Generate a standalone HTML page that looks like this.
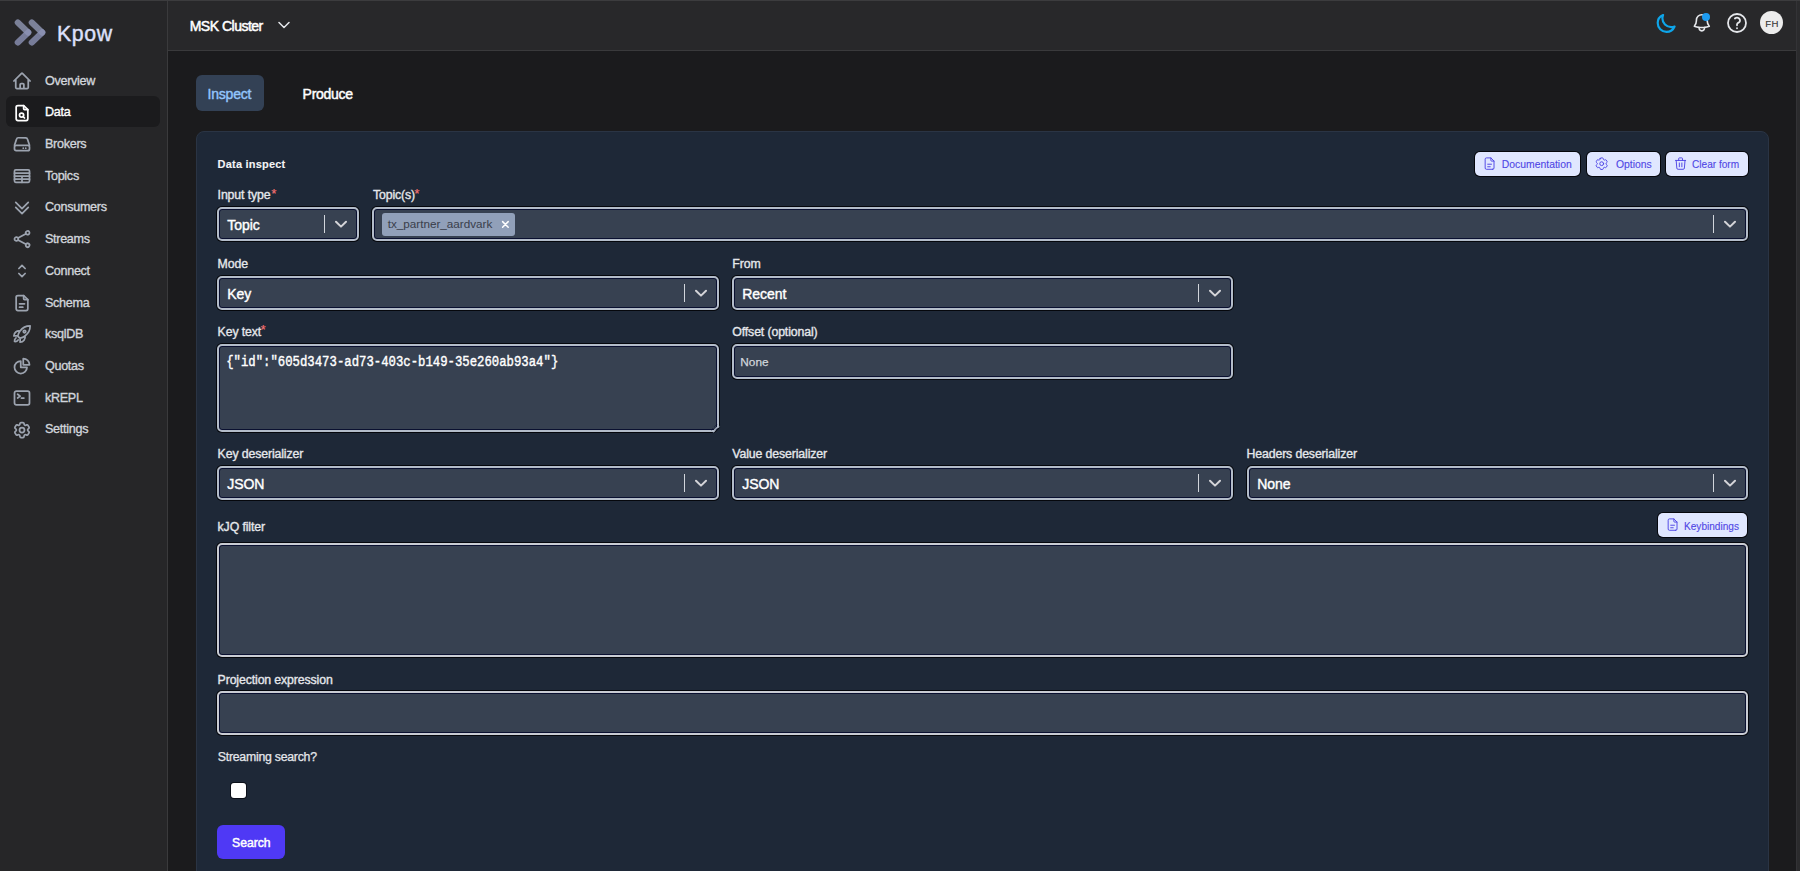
<!DOCTYPE html><html><head><meta charset="utf-8"><style>
html,body{margin:0;padding:0;width:1800px;height:871px;overflow:hidden;background:#1b1b1d;font-family:'Liberation Sans', sans-serif;}
.r{position:absolute;box-sizing:border-box;}
.t{position:absolute;line-height:1;white-space:pre;}
</style></head><body>
<div class="r" style="left:0px;top:0px;width:168px;height:871px;background:#262628;"></div>
<div class="r" style="left:167px;top:0px;width:1px;height:871px;background:#3a3a3c;"></div>
<div class="r" style="left:168px;top:0px;width:1628px;height:50px;background:#28282a;"></div>
<div class="r" style="left:168px;top:50px;width:1628px;height:1px;background:#3a3a3c;"></div>
<div class="r" style="left:1796px;top:0px;width:4px;height:871px;background:#2b2b2d;border-left:1px solid #333336;"></div>
<div class="r" style="left:0px;top:0px;width:1800px;height:1px;background:#3c3c3e;"></div>
<svg class="r" style="left:10px;top:16px;" width="40" height="34" viewBox="10 16 40 34"><defs><linearGradient id="lg1" x1="0" y1="0" x2="1" y2="1"><stop offset="0" stop-color="#6e7390"/><stop offset="1" stop-color="#9aa1c8"/></linearGradient><linearGradient id="lg2" x1="0" y1="1" x2="1" y2="0"><stop offset="0" stop-color="#8f96bb"/><stop offset="1" stop-color="#7c829f"/></linearGradient></defs><g fill="none" stroke-linecap="round" stroke-width="6.2" opacity="0.95"><path d="M17.8 22.6 L28.2 32.6" stroke="#80869f"/><path d="M17.8 42.4 L28.2 32.4" stroke="#9299be" opacity="0.8"/><path d="M31.8 22.6 L42.2 32.6" stroke="#80869f"/><path d="M31.8 42.4 L42.2 32.4" stroke="#9299be" opacity="0.8"/></g></svg>
<div class="t" style="left:57.0px;top:23.89px;font-size:21.3px;color:#dde0fb;font-weight:400;letter-spacing:0.6px;font-family:'Liberation Sans', sans-serif;-webkit-text-stroke:0.4px #dde0fb;">Kpow</div>
<div class="r" style="left:6px;top:96px;width:154px;height:31px;background:#1b1b1d;border-radius:6px;"></div>
<svg class="r" style="left:12px;top:70.8px;" width="20" height="20" viewBox="0 0 24 24"><g fill="none" stroke="#9ca3af" stroke-width="2.1" stroke-linecap="round" stroke-linejoin="round"><path d="m2.25 12 8.954-8.955c.44-.439 1.152-.439 1.591 0L21.75 12M4.5 9.75v10.125c0 .621.504 1.125 1.125 1.125H9.75v-4.875c0-.621.504-1.125 1.125-1.125h2.25c.621 0 1.125.504 1.125 1.125V21h4.125c.621 0 1.125-.504 1.125-1.125V9.75M8.25 21h8.25"/></g></svg>
<div class="t" style="left:44.9px;top:74.69px;font-size:12.6px;color:#d1d5db;font-weight:400;letter-spacing:-0.28px;font-family:'Liberation Sans', sans-serif;-webkit-text-stroke:0.35px #d1d5db;">Overview</div>
<svg class="r" style="left:12px;top:102.5px;" width="20" height="20" viewBox="0 0 24 24"><g fill="none" stroke="#ffffff" stroke-width="2.1" stroke-linecap="round" stroke-linejoin="round"><path d="M14 3v4a1 1 0 0 0 1 1h4"/><path d="M17 21H7a2 2 0 0 1-2-2V5a2 2 0 0 1 2-2h7l5 5v11a2 2 0 0 1-2 2z"/><circle cx="11.5" cy="14.5" r="2.5"/><path d="M13.3 16.3 15 18"/></g></svg>
<div class="t" style="left:44.9px;top:106.39px;font-size:12.6px;color:#ffffff;font-weight:400;letter-spacing:-0.28px;font-family:'Liberation Sans', sans-serif;-webkit-text-stroke:0.35px #ffffff;">Data</div>
<svg class="r" style="left:12px;top:134.2px;" width="20" height="20" viewBox="0 0 24 24"><g fill="none" stroke="#9ca3af" stroke-width="2.1" stroke-linecap="round" stroke-linejoin="round"><path d="M3 13.5 5.5 6A2 2 0 0 1 7.4 4.5h9.2A2 2 0 0 1 18.5 6L21 13.5"/><rect x="3" y="13.5" width="18" height="6.5" rx="2"/><path d="M16.5 17h.01M13.5 17h.01"/></g></svg>
<div class="t" style="left:44.9px;top:138.09px;font-size:12.6px;color:#d1d5db;font-weight:400;letter-spacing:-0.28px;font-family:'Liberation Sans', sans-serif;-webkit-text-stroke:0.35px #d1d5db;">Brokers</div>
<svg class="r" style="left:12px;top:165.9px;" width="20" height="20" viewBox="0 0 24 24"><g fill="none" stroke="#9ca3af" stroke-width="2.1" stroke-linecap="round" stroke-linejoin="round"><rect x="3" y="4.5" width="18" height="15" rx="1.5"/><path d="M3 8.6h18M3 12.2h18M3 15.8h18M12 12.2v7.3"/></g></svg>
<div class="t" style="left:44.9px;top:169.79px;font-size:12.6px;color:#d1d5db;font-weight:400;letter-spacing:-0.28px;font-family:'Liberation Sans', sans-serif;-webkit-text-stroke:0.35px #d1d5db;">Topics</div>
<svg class="r" style="left:12px;top:197.6px;" width="20" height="20" viewBox="0 0 24 24"><g fill="none" stroke="#9ca3af" stroke-width="2.1" stroke-linecap="round" stroke-linejoin="round"><path d="m4.5 5.25 7.5 7.5 7.5-7.5m-15 6 7.5 7.5 7.5-7.5"/></g></svg>
<div class="t" style="left:44.9px;top:201.49px;font-size:12.6px;color:#d1d5db;font-weight:400;letter-spacing:-0.28px;font-family:'Liberation Sans', sans-serif;-webkit-text-stroke:0.35px #d1d5db;">Consumers</div>
<svg class="r" style="left:12px;top:229.3px;" width="20" height="20" viewBox="0 0 24 24"><g fill="none" stroke="#9ca3af" stroke-width="2.1" stroke-linecap="round" stroke-linejoin="round"><path d="M7.217 10.907a2.25 2.25 0 1 0 0 2.186m0-2.186c.18.324.283.696.283 1.093s-.103.77-.283 1.093m0-2.186 9.566-5.314m-9.566 7.5 9.566 5.314m0 0a2.25 2.25 0 1 0 3.935 2.186 2.25 2.25 0 0 0-3.935-2.186Zm0-12.814a2.25 2.25 0 1 0 3.933-2.185 2.25 2.25 0 0 0-3.933 2.185Z"/></g></svg>
<div class="t" style="left:44.9px;top:233.19px;font-size:12.6px;color:#d1d5db;font-weight:400;letter-spacing:-0.28px;font-family:'Liberation Sans', sans-serif;-webkit-text-stroke:0.35px #d1d5db;">Streams</div>
<svg class="r" style="left:12px;top:261.0px;" width="20" height="20" viewBox="0 0 24 24"><g fill="none" stroke="#9ca3af" stroke-width="2.1" stroke-linecap="round" stroke-linejoin="round"><path d="M8.25 15 12 18.75 15.75 15m-7.5-6L12 5.25 15.75 9"/></g></svg>
<div class="t" style="left:44.9px;top:264.89px;font-size:12.6px;color:#d1d5db;font-weight:400;letter-spacing:-0.28px;font-family:'Liberation Sans', sans-serif;-webkit-text-stroke:0.35px #d1d5db;">Connect</div>
<svg class="r" style="left:12px;top:292.7px;" width="20" height="20" viewBox="0 0 24 24"><g fill="none" stroke="#9ca3af" stroke-width="2.1" stroke-linecap="round" stroke-linejoin="round"><path d="M14 3v4a1 1 0 0 0 1 1h4"/><path d="M17 21H7a2 2 0 0 1-2-2V5a2 2 0 0 1 2-2h7l5 5v11a2 2 0 0 1-2 2z"/><path d="M9 13h6M9 17h4"/></g></svg>
<div class="t" style="left:44.9px;top:296.59px;font-size:12.6px;color:#d1d5db;font-weight:400;letter-spacing:-0.28px;font-family:'Liberation Sans', sans-serif;-webkit-text-stroke:0.35px #d1d5db;">Schema</div>
<svg class="r" style="left:12px;top:324.4px;" width="20" height="20" viewBox="0 0 24 24"><g fill="none" stroke="#9ca3af" stroke-width="2.1" stroke-linecap="round" stroke-linejoin="round"><path d="M15.59 14.37a6 6 0 0 1-5.84 7.38v-4.8m5.84-2.58a14.98 14.98 0 0 0 6.16-12.12A14.98 14.98 0 0 0 9.631 8.41m5.96 5.96a14.926 14.926 0 0 1-5.841 2.58m-.119-8.54a6 6 0 0 0-7.381 5.84h4.8m2.581-5.84a14.927 14.927 0 0 0-2.58 5.84m2.699 2.7c-.103.021-.207.041-.311.06a15.09 15.09 0 0 1-2.448-2.448 14.9 14.9 0 0 1 .06-.312m-2.24 2.39a4.493 4.493 0 0 0-1.757 4.306 4.493 4.493 0 0 0 4.306-1.758M16.5 9a1.5 1.5 0 1 1-3 0 1.5 1.5 0 0 1 3 0Z"/></g></svg>
<div class="t" style="left:44.9px;top:328.29px;font-size:12.6px;color:#d1d5db;font-weight:400;letter-spacing:-0.28px;font-family:'Liberation Sans', sans-serif;-webkit-text-stroke:0.35px #d1d5db;">ksqlDB</div>
<svg class="r" style="left:12px;top:356.1px;" width="20" height="20" viewBox="0 0 24 24"><g fill="none" stroke="#9ca3af" stroke-width="2.1" stroke-linecap="round" stroke-linejoin="round"><path d="M10.5 6a7.5 7.5 0 1 0 7.5 7.5h-7.5V6Z"/><path d="M13.5 10.5H21A7.5 7.5 0 0 0 13.5 3v7.5Z"/></g></svg>
<div class="t" style="left:44.9px;top:359.99px;font-size:12.6px;color:#d1d5db;font-weight:400;letter-spacing:-0.28px;font-family:'Liberation Sans', sans-serif;-webkit-text-stroke:0.35px #d1d5db;">Quotas</div>
<svg class="r" style="left:12px;top:387.8px;" width="20" height="20" viewBox="0 0 24 24"><g fill="none" stroke="#9ca3af" stroke-width="2.1" stroke-linecap="round" stroke-linejoin="round"><path d="m6.75 7.5 3 2.25-3 2.25m4.5 0h3m-9 8.25h13.5A2.25 2.25 0 0 0 21 18V6a2.25 2.25 0 0 0-2.25-2.25H5.25A2.25 2.25 0 0 0 3 6v12a2.25 2.25 0 0 0 2.25 2.25Z"/></g></svg>
<div class="t" style="left:44.9px;top:391.69px;font-size:12.6px;color:#d1d5db;font-weight:400;letter-spacing:-0.28px;font-family:'Liberation Sans', sans-serif;-webkit-text-stroke:0.35px #d1d5db;">kREPL</div>
<svg class="r" style="left:12px;top:419.5px;" width="20" height="20" viewBox="0 0 24 24"><g fill="none" stroke="#9ca3af" stroke-width="2.1" stroke-linecap="round" stroke-linejoin="round"><path d="M9.594 3.94c.09-.542.56-.94 1.11-.94h2.593c.55 0 1.02.398 1.11.94l.213 1.281c.063.374.313.686.645.87.074.04.147.083.22.127.325.196.72.257 1.075.124l1.217-.456a1.125 1.125 0 0 1 1.37.49l1.296 2.247a1.125 1.125 0 0 1-.26 1.431l-1.003.827c-.293.241-.438.613-.43.992a7.723 7.723 0 0 1 0 .255c-.008.378.137.75.43.991l1.004.827c.424.35.534.955.26 1.43l-1.298 2.247a1.125 1.125 0 0 1-1.369.491l-1.217-.456c-.355-.133-.75-.072-1.076.124a6.47 6.47 0 0 1-.22.128c-.331.183-.581.495-.644.869l-.213 1.281c-.09.543-.56.94-1.11.94h-2.594c-.55 0-1.019-.398-1.11-.94l-.213-1.281c-.062-.374-.312-.686-.644-.87a6.52 6.52 0 0 1-.22-.127c-.325-.196-.72-.257-1.076-.124l-1.217.456a1.125 1.125 0 0 1-1.369-.49l-1.297-2.247a1.125 1.125 0 0 1 .26-1.431l1.004-.827c.292-.24.437-.613.43-.991a6.932 6.932 0 0 1 0-.255c.007-.38-.138-.751-.43-.992l-1.004-.827a1.125 1.125 0 0 1-.26-1.43l1.297-2.247a1.125 1.125 0 0 1 1.37-.491l1.216.456c.356.133.751.072 1.076-.124.072-.044.146-.086.22-.128.332-.183.582-.495.644-.869l.214-1.28Z"/><path d="M15 12a3 3 0 1 1-6 0 3 3 0 0 1 6 0Z"/></g></svg>
<div class="t" style="left:44.9px;top:423.39px;font-size:12.6px;color:#d1d5db;font-weight:400;letter-spacing:-0.28px;font-family:'Liberation Sans', sans-serif;-webkit-text-stroke:0.35px #d1d5db;">Settings</div>
<div class="t" style="left:189.7px;top:19.40px;font-size:14px;color:#ffffff;font-weight:400;letter-spacing:-0.5px;font-family:'Liberation Sans', sans-serif;-webkit-text-stroke:0.5px #ffffff;">MSK Cluster</div>
<svg class="r" style="left:278px;top:21px;" width="12" height="9" viewBox="0 0 12 9"><path d="M1 1.5 6 6.5 11 1.5" fill="none" stroke="#e5e7eb" stroke-width="1.5" stroke-linecap="round" stroke-linejoin="round"/></svg>
<svg class="r" style="left:1655.2px;top:12.6px;" width="21.6" height="21.6" viewBox="0 0 24 24"><path d="M21.752 15.002A9.72 9.72 0 0 1 18 15.75c-5.385 0-9.75-4.365-9.75-9.75 0-1.33.266-2.597.748-3.752A9.753 9.753 0 0 0 3 11.25C3 16.635 7.365 21 12.75 21a9.753 9.753 0 0 0 9.002-5.998Z" fill="none" stroke="#0ea5e9" stroke-width="2.4" stroke-linejoin="round"/></svg>
<svg class="r" style="left:1690.5px;top:12.1px;" width="21.6" height="21.6" viewBox="0 0 24 24"><path d="M14.857 17.082a23.848 23.848 0 0 0 5.454-1.31A8.967 8.967 0 0 1 18 9.75V9A6 6 0 0 0 6 9v.75a8.967 8.967 0 0 1-2.312 6.022c1.733.64 3.56 1.085 5.455 1.31m5.714 0a24.255 24.255 0 0 1-5.714 0m5.714 0a3 3 0 1 1-5.714 0" fill="none" stroke="#e5e7eb" stroke-width="1.8" stroke-linecap="round" stroke-linejoin="round"/></svg>
<div class="r" style="left:1702px;top:13px;width:8px;height:8px;background:#1d9bf0;border-radius:50%;"></div>
<svg class="r" style="left:1725px;top:11px;" width="24" height="24" viewBox="0 0 24 24"><path d="M9.879 7.519c1.171-1.025 3.071-1.025 4.242 0 1.172 1.025 1.172 2.687 0 3.712-.203.179-.43.326-.67.442-.745.361-1.45.999-1.45 1.827v.75M21 12a9 9 0 1 1-18 0 9 9 0 0 1 18 0Zm-9 5.25h.008v.008H12v-.008Z" fill="none" stroke="#e5e7eb" stroke-width="1.8" stroke-linecap="round" stroke-linejoin="round"/></svg>
<div class="r" style="left:1760px;top:11px;width:23px;height:23px;background:#ececec;border-radius:50%;"></div>
<div class="t" style="left:1765.3px;top:18.64px;font-size:9.6px;color:#333333;font-weight:400;letter-spacing:0.3px;font-family:'Liberation Sans', sans-serif;-webkit-text-stroke:0.1px #333333;">FH</div>
<div class="r" style="left:196px;top:75px;width:68px;height:36px;background:#334155;border-radius:6px;"></div>
<div class="t" style="left:207.5px;top:87.00px;font-size:14px;color:#93c5fd;font-weight:400;letter-spacing:-0.2px;font-family:'Liberation Sans', sans-serif;-webkit-text-stroke:0.4px #93c5fd;">Inspect</div>
<div class="t" style="left:302.6px;top:87.40px;font-size:14px;color:#ffffff;font-weight:400;letter-spacing:-0.3px;font-family:'Liberation Sans', sans-serif;-webkit-text-stroke:0.45px #ffffff;">Produce</div>
<div class="r" style="left:196px;top:131px;width:1573px;height:759px;background:#1e2837;border:1px solid #2a3444;border-radius:8px;"></div>
<div class="t" style="left:217.6px;top:159.25px;font-size:11px;color:#f3f4f6;font-weight:700;letter-spacing:0.2px;font-family:'Liberation Sans', sans-serif;-webkit-text-stroke:0.1px #f3f4f6;">Data inspect</div>
<div class="r" style="left:1475px;top:152px;width:105px;height:24px;background:#e0e7ff;border-radius:5px;box-shadow:0 0 0 1px #05070c;"></div>
<svg class="r" style="left:1482.4px;top:156px" width="15.2" height="15.2" viewBox="0 0 24 24"><g fill="none" stroke="#4f46e5" stroke-width="1.5" stroke-linecap="round" stroke-linejoin="round"><path d="M14 3v4a1 1 0 0 0 1 1h4"/><path d="M17 21H7a2 2 0 0 1-2-2V5a2 2 0 0 1 2-2h7l5 5v11a2 2 0 0 1-2 2z"/><path d="M9 13h6M9 17h4"/></g></svg>
<div class="t" style="left:1501.8px;top:160.16px;font-size:10.4px;color:#4f46e5;font-weight:400;letter-spacing:0px;font-family:'Liberation Sans', sans-serif;-webkit-text-stroke:0.1px #4f46e5;">Documentation</div>
<div class="r" style="left:1587px;top:152px;width:73px;height:24px;background:#e0e7ff;border-radius:5px;box-shadow:0 0 0 1px #05070c;"></div>
<svg class="r" style="left:1594.2px;top:155.8px" width="15.4" height="15.4" viewBox="0 0 24 24"><g fill="none" stroke="#4f46e5" stroke-width="1.5" stroke-linecap="round" stroke-linejoin="round"><path d="M9.594 3.94c.09-.542.56-.94 1.11-.94h2.593c.55 0 1.02.398 1.11.94l.213 1.281c.063.374.313.686.645.87.074.04.147.083.22.127.325.196.72.257 1.075.124l1.217-.456a1.125 1.125 0 0 1 1.37.49l1.296 2.247a1.125 1.125 0 0 1-.26 1.431l-1.003.827c-.293.241-.438.613-.43.992a7.723 7.723 0 0 1 0 .255c-.008.378.137.75.43.991l1.004.827c.424.35.534.955.26 1.43l-1.298 2.247a1.125 1.125 0 0 1-1.369.491l-1.217-.456c-.355-.133-.75-.072-1.076.124a6.47 6.47 0 0 1-.22.128c-.331.183-.581.495-.644.869l-.213 1.281c-.09.543-.56.94-1.11.94h-2.594c-.55 0-1.019-.398-1.11-.94l-.213-1.281c-.062-.374-.312-.686-.644-.87a6.52 6.52 0 0 1-.22-.127c-.325-.196-.72-.257-1.076-.124l-1.217.456a1.125 1.125 0 0 1-1.369-.49l-1.297-2.247a1.125 1.125 0 0 1 .26-1.431l1.004-.827c.292-.24.437-.613.43-.991a6.932 6.932 0 0 1 0-.255c.007-.38-.138-.751-.43-.992l-1.004-.827a1.125 1.125 0 0 1-.26-1.43l1.297-2.247a1.125 1.125 0 0 1 1.37-.491l1.216.456c.356.133.751.072 1.076-.124.072-.044.146-.086.22-.128.332-.183.582-.495.644-.869l.214-1.28Z"/><path d="M15 12a3 3 0 1 1-6 0 3 3 0 0 1 6 0Z"/></g></svg>
<div class="t" style="left:1616.0px;top:160.16px;font-size:10.4px;color:#4f46e5;font-weight:400;letter-spacing:0px;font-family:'Liberation Sans', sans-serif;-webkit-text-stroke:0.1px #4f46e5;">Options</div>
<div class="r" style="left:1666px;top:152px;width:82px;height:24px;background:#e0e7ff;border-radius:5px;box-shadow:0 0 0 1px #05070c;"></div>
<svg class="r" style="left:1673.4px;top:155.6px" width="15.2" height="15.2" viewBox="0 0 24 24"><g fill="none" stroke="#4f46e5" stroke-width="1.5" stroke-linecap="round" stroke-linejoin="round"><path d="M4 7h16M10 11v6M14 11v6M5 7l1 12a2 2 0 0 0 2 2h8a2 2 0 0 0 2-2l1-12M9 7V4a1 1 0 0 1 1-1h4a1 1 0 0 1 1 1v3"/></g></svg>
<div class="t" style="left:1692.0px;top:160.41px;font-size:10.1px;color:#4f46e5;font-weight:400;letter-spacing:0px;font-family:'Liberation Sans', sans-serif;-webkit-text-stroke:0.1px #4f46e5;">Clear form</div>
<div class="t" style="left:217.6px;top:189.44px;font-size:12.3px;color:#e5e7eb;font-weight:400;letter-spacing:-0.12px;font-family:'Liberation Sans', sans-serif;-webkit-text-stroke:0.35px #e5e7eb;">Input type</div>
<div class="t" style="left:271.5px;top:187.9px;font-size:12.5px;color:#f87171;font-family:'Liberation Sans', sans-serif;-webkit-text-stroke:0.2px #f87171">*</div>
<div class="t" style="left:373.0px;top:189.44px;font-size:12.3px;color:#e5e7eb;font-weight:400;letter-spacing:-0.12px;font-family:'Liberation Sans', sans-serif;-webkit-text-stroke:0.35px #e5e7eb;">Topic(s)</div>
<div class="t" style="left:414.5px;top:187.9px;font-size:12.5px;color:#f87171;font-family:'Liberation Sans', sans-serif;-webkit-text-stroke:0.2px #f87171">*</div>
<div class="r" style="left:217px;top:207px;width:142px;height:34px;background:#374151;border:2px solid #b3bcc9;border-radius:5px;box-shadow:0 0 0 1px #05070c, inset 0 0 0 1px #0a1030;"></div>
<div class="r" style="left:324px;top:215px;width:1px;height:18px;background:#d1d5db;"></div>
<svg class="r" style="left:335px;top:219.5px;" width="12" height="9" viewBox="0 0 12 9"><path d="M1 1.8 6 6.6 11 1.8" fill="none" stroke="#d4d4d8" stroke-width="2" stroke-linecap="round" stroke-linejoin="round"/></svg>
<div class="t" style="left:227.3px;top:217.90px;font-size:14px;color:#ffffff;font-weight:400;letter-spacing:-0.05px;font-family:'Liberation Sans', sans-serif;-webkit-text-stroke:0.4px #ffffff;">Topic</div>
<div class="r" style="left:372px;top:207px;width:1376px;height:34px;background:#374151;border:2px solid #b3bcc9;border-radius:5px;box-shadow:0 0 0 1px #05070c, inset 0 0 0 1px #0a1030;"></div>
<div class="r" style="left:1713px;top:215px;width:1px;height:18px;background:#d1d5db;"></div>
<svg class="r" style="left:1724px;top:219.5px;" width="12" height="9" viewBox="0 0 12 9"><path d="M1 1.8 6 6.6 11 1.8" fill="none" stroke="#d4d4d8" stroke-width="2" stroke-linecap="round" stroke-linejoin="round"/></svg>
<div class="r" style="left:382px;top:213px;width:133px;height:23px;background:#91a0b9;border-radius:3px;"></div>
<div class="t" style="left:387.7px;top:218.46px;font-size:11.7px;color:#3b414d;font-weight:400;letter-spacing:0px;font-family:'Liberation Sans', sans-serif;-webkit-text-stroke:0.05px #3b414d;">tx_partner_aardvark</div>
<svg class="r" style="left:501px;top:220px;" width="9" height="9" viewBox="0 0 9 9"><path d="M1.6 1.6 7.2 7.2M7.2 1.6 1.6 7.2" stroke="#ffffff" stroke-width="1.5" stroke-linecap="round"/></svg>
<div class="t" style="left:217.6px;top:258.05px;font-size:12.3px;color:#e5e7eb;font-weight:400;letter-spacing:-0.12px;font-family:'Liberation Sans', sans-serif;-webkit-text-stroke:0.35px #e5e7eb;">Mode</div>
<div class="t" style="left:732.3px;top:258.05px;font-size:12.3px;color:#e5e7eb;font-weight:400;letter-spacing:-0.12px;font-family:'Liberation Sans', sans-serif;-webkit-text-stroke:0.35px #e5e7eb;">From</div>
<div class="r" style="left:217px;top:276px;width:502px;height:34px;background:#374151;border:2px solid #b3bcc9;border-radius:5px;box-shadow:0 0 0 1px #05070c, inset 0 0 0 1px #0a1030;"></div>
<div class="r" style="left:684px;top:284px;width:1px;height:18px;background:#d1d5db;"></div>
<svg class="r" style="left:695px;top:288.5px;" width="12" height="9" viewBox="0 0 12 9"><path d="M1 1.8 6 6.6 11 1.8" fill="none" stroke="#d4d4d8" stroke-width="2" stroke-linecap="round" stroke-linejoin="round"/></svg>
<div class="t" style="left:227.3px;top:286.90px;font-size:14px;color:#ffffff;font-weight:400;letter-spacing:-0.05px;font-family:'Liberation Sans', sans-serif;-webkit-text-stroke:0.4px #ffffff;">Key</div>
<div class="r" style="left:732px;top:276px;width:501px;height:34px;background:#374151;border:2px solid #b3bcc9;border-radius:5px;box-shadow:0 0 0 1px #05070c, inset 0 0 0 1px #0a1030;"></div>
<div class="r" style="left:1198px;top:284px;width:1px;height:18px;background:#d1d5db;"></div>
<svg class="r" style="left:1209px;top:288.5px;" width="12" height="9" viewBox="0 0 12 9"><path d="M1 1.8 6 6.6 11 1.8" fill="none" stroke="#d4d4d8" stroke-width="2" stroke-linecap="round" stroke-linejoin="round"/></svg>
<div class="t" style="left:742.3px;top:286.90px;font-size:14px;color:#ffffff;font-weight:400;letter-spacing:-0.05px;font-family:'Liberation Sans', sans-serif;-webkit-text-stroke:0.4px #ffffff;">Recent</div>
<div class="t" style="left:217.6px;top:326.05px;font-size:12.3px;color:#e5e7eb;font-weight:400;letter-spacing:-0.12px;font-family:'Liberation Sans', sans-serif;-webkit-text-stroke:0.35px #e5e7eb;">Key text</div>
<div class="t" style="left:260.8px;top:324.4px;font-size:12.5px;color:#f87171;font-family:'Liberation Sans', sans-serif;-webkit-text-stroke:0.2px #f87171">*</div>
<div class="t" style="left:732.3px;top:326.44px;font-size:12.3px;color:#e5e7eb;font-weight:400;letter-spacing:-0.12px;font-family:'Liberation Sans', sans-serif;-webkit-text-stroke:0.35px #e5e7eb;">Offset (optional)</div>
<div class="r" style="left:217px;top:344px;width:502px;height:88px;background:#374151;border:2px solid #b3bcc9;border-radius:5px;box-shadow:0 0 0 1px #05070c, inset 0 0 0 1px #0a1030;"></div>
<svg class="r" style="left:706px;top:418px;" width="16" height="16" viewBox="706 418 16 16"><path d="M712.2 433 L721 433 L721 424.2 Z" fill="#1e2837"/><path d="M713.6 431.4 L718.4 426.6" stroke="#b3bcc9" stroke-width="1.9" stroke-linecap="round"/><path d="M714.6 432.6 L719.6 427.6" stroke="#05070c" stroke-width="1"/><path d="M711.2 430.2 L717.2 424.2" stroke="#0a1030" stroke-width="1" stroke-dasharray="1 1"/><path d="M715.4 430.4 L717.6 428.2" stroke="#0a1030" stroke-width="0.9"/></svg>
<div class="t" style="left:226.2px;top:355.2px;font-size:12.3px;color:#ffffff;font-family:'Liberation Mono', monospace;transform:scaleY(1.2);transform-origin:0 0;-webkit-text-stroke:0.35px #fff">{"id":"605d3473-ad73-403c-b149-35e260ab93a4"}</div>
<div class="r" style="left:732px;top:344px;width:501px;height:35px;background:#374151;border:2px solid #b3bcc9;border-radius:5px;box-shadow:0 0 0 1px #05070c, inset 0 0 0 1px #0a1030;"></div>
<div class="t" style="left:740.3px;top:356.97px;font-size:11.8px;color:#d1d5db;font-weight:400;letter-spacing:0px;font-family:'Liberation Sans', sans-serif;-webkit-text-stroke:0.25px #d1d5db;">None</div>
<div class="t" style="left:217.6px;top:447.85px;font-size:12.3px;color:#e5e7eb;font-weight:400;letter-spacing:-0.12px;font-family:'Liberation Sans', sans-serif;-webkit-text-stroke:0.35px #e5e7eb;">Key deserializer</div>
<div class="t" style="left:732.3px;top:447.85px;font-size:12.3px;color:#e5e7eb;font-weight:400;letter-spacing:-0.12px;font-family:'Liberation Sans', sans-serif;-webkit-text-stroke:0.35px #e5e7eb;">Value deserializer</div>
<div class="t" style="left:1246.5px;top:447.85px;font-size:12.3px;color:#e5e7eb;font-weight:400;letter-spacing:-0.12px;font-family:'Liberation Sans', sans-serif;-webkit-text-stroke:0.35px #e5e7eb;">Headers deserializer</div>
<div class="r" style="left:217px;top:466px;width:502px;height:34px;background:#374151;border:2px solid #b3bcc9;border-radius:5px;box-shadow:0 0 0 1px #05070c, inset 0 0 0 1px #0a1030;"></div>
<div class="r" style="left:684px;top:474px;width:1px;height:18px;background:#d1d5db;"></div>
<svg class="r" style="left:695px;top:478.5px;" width="12" height="9" viewBox="0 0 12 9"><path d="M1 1.8 6 6.6 11 1.8" fill="none" stroke="#d4d4d8" stroke-width="2" stroke-linecap="round" stroke-linejoin="round"/></svg>
<div class="t" style="left:227.3px;top:476.90px;font-size:14px;color:#ffffff;font-weight:400;letter-spacing:-0.05px;font-family:'Liberation Sans', sans-serif;-webkit-text-stroke:0.4px #ffffff;">JSON</div>
<div class="r" style="left:732px;top:466px;width:501px;height:34px;background:#374151;border:2px solid #b3bcc9;border-radius:5px;box-shadow:0 0 0 1px #05070c, inset 0 0 0 1px #0a1030;"></div>
<div class="r" style="left:1198px;top:474px;width:1px;height:18px;background:#d1d5db;"></div>
<svg class="r" style="left:1209px;top:478.5px;" width="12" height="9" viewBox="0 0 12 9"><path d="M1 1.8 6 6.6 11 1.8" fill="none" stroke="#d4d4d8" stroke-width="2" stroke-linecap="round" stroke-linejoin="round"/></svg>
<div class="t" style="left:742.3px;top:476.90px;font-size:14px;color:#ffffff;font-weight:400;letter-spacing:-0.05px;font-family:'Liberation Sans', sans-serif;-webkit-text-stroke:0.4px #ffffff;">JSON</div>
<div class="r" style="left:1247px;top:466px;width:501px;height:34px;background:#374151;border:2px solid #b3bcc9;border-radius:5px;box-shadow:0 0 0 1px #05070c, inset 0 0 0 1px #0a1030;"></div>
<div class="r" style="left:1713px;top:474px;width:1px;height:18px;background:#d1d5db;"></div>
<svg class="r" style="left:1724px;top:478.5px;" width="12" height="9" viewBox="0 0 12 9"><path d="M1 1.8 6 6.6 11 1.8" fill="none" stroke="#d4d4d8" stroke-width="2" stroke-linecap="round" stroke-linejoin="round"/></svg>
<div class="t" style="left:1257.3px;top:476.90px;font-size:14px;color:#ffffff;font-weight:400;letter-spacing:-0.05px;font-family:'Liberation Sans', sans-serif;-webkit-text-stroke:0.4px #ffffff;">None</div>
<div class="t" style="left:217.6px;top:520.84px;font-size:12.3px;color:#e5e7eb;font-weight:400;letter-spacing:-0.12px;font-family:'Liberation Sans', sans-serif;-webkit-text-stroke:0.35px #e5e7eb;">kJQ filter</div>
<div class="r" style="left:1658px;top:513px;width:89px;height:24px;background:#e0e7ff;border-radius:5px;box-shadow:0 0 0 1px #05070c;"></div>
<svg class="r" style="left:1665.4px;top:516.6px" width="15.2" height="15.2" viewBox="0 0 24 24"><g fill="none" stroke="#4f46e5" stroke-width="1.5" stroke-linecap="round" stroke-linejoin="round"><path d="M14 3v4a1 1 0 0 0 1 1h4"/><path d="M17 21H7a2 2 0 0 1-2-2V5a2 2 0 0 1 2-2h7l5 5v11a2 2 0 0 1-2 2z"/><path d="M9 13h6M9 17h4"/></g></svg>
<div class="t" style="left:1684.0px;top:521.61px;font-size:10.1px;color:#4f46e5;font-weight:400;letter-spacing:0px;font-family:'Liberation Sans', sans-serif;-webkit-text-stroke:0.1px #4f46e5;">Keybindings</div>
<div class="r" style="left:217px;top:543px;width:1531px;height:114px;background:#374151;border:2px solid #b3bcc9;border-radius:5px;box-shadow:0 0 0 1px #05070c, inset 0 0 0 1px #0a1030;border-color:#c9ccd3;"></div>
<div class="t" style="left:217.6px;top:673.54px;font-size:12.3px;color:#e5e7eb;font-weight:400;letter-spacing:-0.12px;font-family:'Liberation Sans', sans-serif;-webkit-text-stroke:0.35px #e5e7eb;">Projection expression</div>
<div class="r" style="left:217px;top:691px;width:1531px;height:44px;background:#374151;border:2px solid #b3bcc9;border-radius:5px;box-shadow:0 0 0 1px #05070c, inset 0 0 0 1px #0a1030;border-color:#c9ccd3;"></div>
<div class="t" style="left:217.8px;top:751.34px;font-size:12.3px;color:#e5e7eb;font-weight:400;letter-spacing:-0.25px;font-family:'Liberation Sans', sans-serif;-webkit-text-stroke:0.25px #e5e7eb;">Streaming search?</div>
<div class="r" style="left:231px;top:783px;width:15px;height:15px;background:#ffffff;border-radius:3px;box-shadow:0 0 0 1px #0b0f18;"></div>
<div class="r" style="left:217px;top:825px;width:68px;height:34px;background:#4f39f5;border-radius:6px;"></div>
<div class="t" style="left:232.0px;top:837.13px;font-size:12.2px;color:#ffffff;font-weight:400;letter-spacing:0px;font-family:'Liberation Sans', sans-serif;-webkit-text-stroke:0.45px #ffffff;">Search</div>
</body></html>
